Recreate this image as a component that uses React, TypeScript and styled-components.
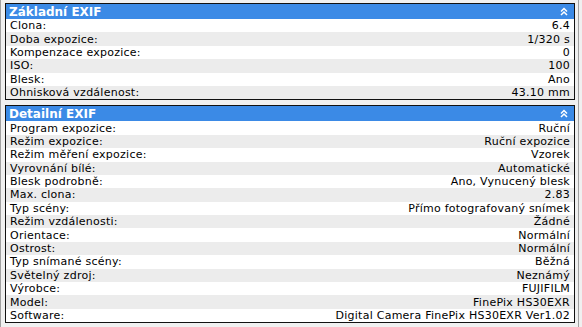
import React from 'react';
import styled, { createGlobalStyle } from 'styled-components';

const GlobalStyle = createGlobalStyle`
  html, body {
    margin: 0;
    padding: 0;
    background: #f0f0f0;
  }
  body {
    font-family: "DejaVu Sans", Verdana, sans-serif;
  }
`;

const Page = styled.div`
  width: 579px;
  height: 327px;
  box-sizing: border-box;
  border-left: 1px solid #a0a0a0;
  border-right: 1px solid #a0a0a0;
  padding: 3px 3px 0 4px;
  display: flex;
  flex-direction: column;
  gap: 5px;
`;

const Panel = styled.section`
  border: 1px solid #111;
  background: #fff;
`;

const Header = styled.div`
  height: 15px;
  background: #3b8ae6;
  color: #fff;
  display: flex;
  align-items: center;
  justify-content: space-between;
  padding: 0 6px 0 3px;
  font-weight: bold;
  font-size: 12px;
`;

const Row = styled.div<{ $odd: boolean }>`
  display: flex;
  justify-content: space-between;
  align-items: center;
  height: 13.4px;
  padding: 1px 4px 0;
  box-sizing: border-box;
  font-size: 11px;
  line-height: 12px;
  letter-spacing: 0.25px;
  color: #000;
  background: ${(p) => (p.$odd ? '#ececec' : '#fff')};
  white-space: nowrap;
`;

const Collapse = () => (
  <svg width="8" height="9" viewBox="0 0 8 9" fill="none" stroke="#fff" strokeWidth="1.5">
    <polyline points="1,4.5 4,1.5 7,4.5" />
    <polyline points="1,8 4,5 7,8" />
  </svg>
);

type Item = [string, string];

const basic: Item[] = [
  ['Clona:', '6.4'],
  ['Doba expozice:', '1/320 s'],
  ['Kompenzace expozice:', '0'],
  ['ISO:', '100'],
  ['Blesk:', 'Ano'],
  ['Ohnisková vzdálenost:', '43.10 mm'],
];

const detail: Item[] = [
  ['Program expozice:', 'Ruční'],
  ['Režim expozice:', 'Ruční expozice'],
  ['Režim měření expozice:', 'Vzorek'],
  ['Vyrovnání bílé:', 'Automatické'],
  ['Blesk podrobně:', 'Ano, Vynucený blesk'],
  ['Max. clona:', '2.83'],
  ['Typ scény:', 'Přímo fotografovaný snímek'],
  ['Režim vzdálenosti:', 'Žádné'],
  ['Orientace:', 'Normální'],
  ['Ostrost:', 'Normální'],
  ['Typ snímané scény:', 'Běžná'],
  ['Světelný zdroj:', 'Neznámý'],
  ['Výrobce:', 'FUJIFILM'],
  ['Model:', 'FinePix HS30EXR'],
  ['Software:', 'Digital Camera FinePix HS30EXR Ver1.02'],
];

const ExifPanel = ({ title, items }: { title: string; items: Item[] }) => (
  <Panel>
    <Header>
      <span>{title}</span>
      <Collapse />
    </Header>
    {items.map(([label, value], i) => (
      <Row key={label} $odd={i % 2 === 1}>
        <span>{label}</span>
        <span>{value}</span>
      </Row>
    ))}
  </Panel>
);

export default function App() {
  return (
    <>
      <GlobalStyle />
      <Page>
        <ExifPanel title="Základní EXIF" items={basic} />
        <ExifPanel title="Detailní EXIF" items={detail} />
      </Page>
    </>
  );
}
